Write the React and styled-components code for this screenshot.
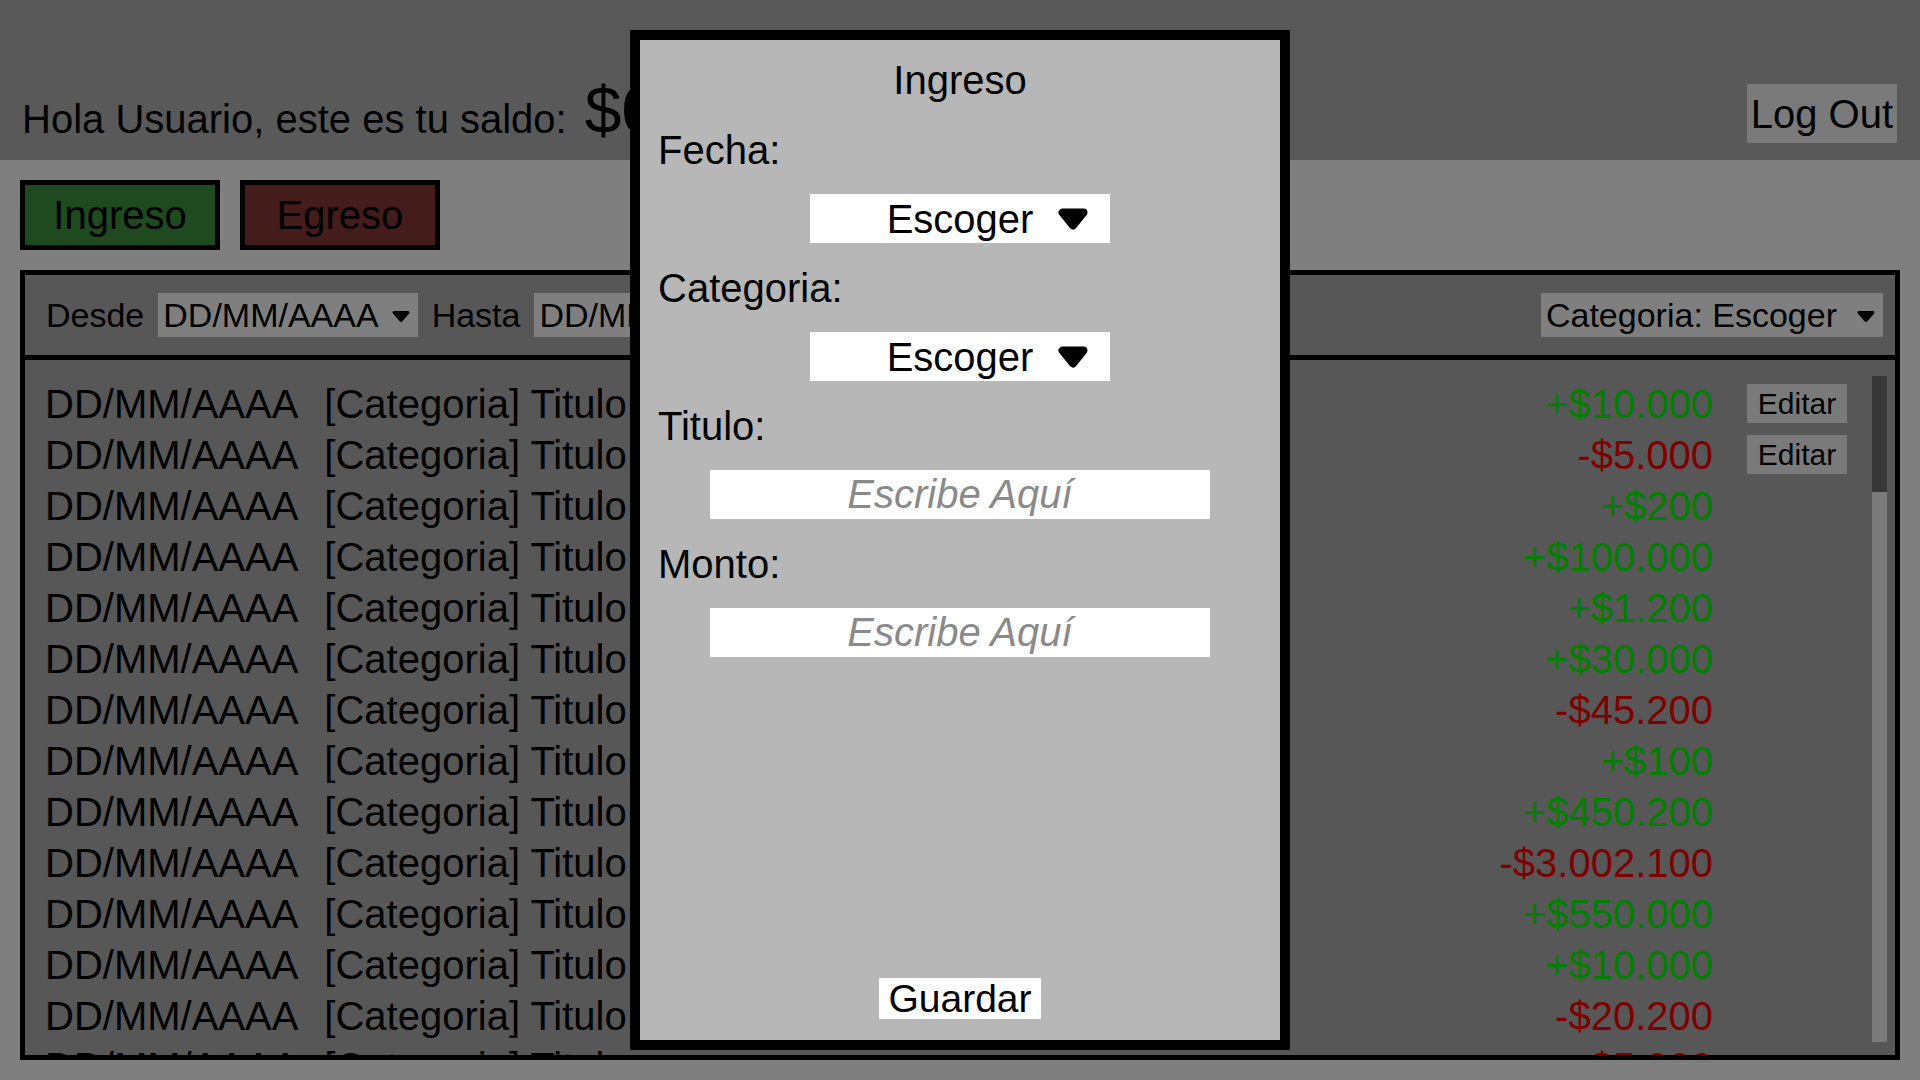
import React from "react";
import styled, { createGlobalStyle } from "styled-components";

const GlobalStyle = createGlobalStyle`
  * { box-sizing: border-box; }
  html, body {
    margin: 0;
    padding: 0;
  }
  body {
    font-family: "Liberation Sans", Arial, sans-serif;
    background: #ffffff;
    color: #000000;
    overflow: hidden;
  }
`;

const movements = [
  { amount: "+$10.000", editable: true },
  { amount: "-$5.000", editable: true },
  { amount: "+$200" },
  { amount: "+$100.000" },
  { amount: "+$1.200" },
  { amount: "+$30.000" },
  { amount: "-$45.200" },
  { amount: "+$100" },
  { amount: "+$450.200" },
  { amount: "-$3.002.100" },
  { amount: "+$550.000" },
  { amount: "+$10.000" },
  { amount: "-$20.200" },
  { amount: "-$5.000" },
];

function Caret({ small }) {
  if (small) {
    return (
      <svg width="20" height="13" viewBox="0 0 20 13">
        <path d="M3 2.5 H17 L10 10.5 Z" fill="#000" stroke="#000" strokeWidth="3" strokeLinejoin="round" />
      </svg>
    );
  }
  return (
    <svg width="34" height="24" viewBox="0 0 34 24">
      <path d="M6.5 5.5 H27.5 L17 18.5 Z" fill="#000" stroke="#000" strokeWidth="8" strokeLinejoin="round" />
    </svg>
  );
}

export default function App() {
  return (
    <>
      <GlobalStyle />
      <Page>
        <Header>
          <Greeting>
            <span>Hola Usuario, este es tu saldo:</span>
            <Balance>$0</Balance>
          </Greeting>
          <LogOut>Log Out</LogOut>
        </Header>
        <Main>
          <Actions>
            <TypeButton $bg="#3e943e">Ingreso</TypeButton>
            <TypeButton $bg="#883838">Egreso</TypeButton>
          </Actions>
          <Table>
            <Filters>
              <span>Desde</span>
              <FilterSelect $gap={12}>
                DD/MM/AAAA
                <Caret small />
              </FilterSelect>
              <span>Hasta</span>
              <FilterSelect $gap={12}>
                DD/MM/AAAA
                <Caret small />
              </FilterSelect>
              <FilterSelect $gap={19} $push>
                Categoria: Escoger
                <Caret small />
              </FilterSelect>
            </Filters>
            <Body>
              <Rows>
                {movements.map((m, i) => (
                  <Row key={i}>
                    <DateCell>DD/MM/AAAA</DateCell>
                    <TitleCell>[Categoria] Titulo</TitleCell>
                    <Amount $positive={m.amount.startsWith("+")}>{m.amount}</Amount>
                    <ActionCell>{m.editable && <EditButton>Editar</EditButton>}</ActionCell>
                  </Row>
                ))}
              </Rows>
              <ScrollTrack>
                <ScrollThumb />
              </ScrollTrack>
            </Body>
          </Table>
        </Main>
      </Page>
      <Overlay>
        <Modal>
          <ModalTitle>Ingreso</ModalTitle>
          <FieldLabel>Fecha:</FieldLabel>
          <Picker>
            <PickerText>Escoger</PickerText>
            <PickerIcon>
              <Caret />
            </PickerIcon>
          </Picker>
          <FieldLabel>Categoria:</FieldLabel>
          <Picker>
            <PickerText>Escoger</PickerText>
            <PickerIcon>
              <Caret />
            </PickerIcon>
          </Picker>
          <FieldLabel>Titulo:</FieldLabel>
          <TextField placeholder="Escribe Aquí" />
          <FieldLabel>Monto:</FieldLabel>
          <TextField placeholder="Escribe Aquí" />
          <SaveButton>Guardar</SaveButton>
        </Modal>
      </Overlay>
    </>
  );
}

const Page = styled.div`
  height: 100vh;
  display: flex;
  flex-direction: column;
`;

const Header = styled.header`
  height: 160px;
  flex-shrink: 0;
  background: #b3b3b3;
  display: flex;
  justify-content: space-between;
  align-items: flex-end;
  padding: 0 23px 12px 22px;
`;

const Greeting = styled.div`
  display: flex;
  align-items: baseline;
  gap: 18px;
  font-size: 40px;
`;

const Balance = styled.span`
  font-size: 66px;
`;

const LogOut = styled.button`
  font-family: inherit;
  font-size: 40px;
  line-height: 46px;
  padding: 7px 4px 6px;
  margin-bottom: 5px;
  border: none;
  background: #f4f4f4;
  color: #000;
`;

const Main = styled.main`
  flex: 1;
  min-height: 0;
  display: flex;
  flex-direction: column;
  gap: 20px;
  padding: 20px;
`;

const Actions = styled.div`
  display: flex;
  gap: 20px;
`;

const TypeButton = styled.button`
  width: 200px;
  height: 70px;
  border: 5px solid #000;
  background: ${({ $bg }) => $bg};
  font-family: inherit;
  font-size: 40px;
  color: #000;
  padding: 0;
`;

const Table = styled.section`
  flex: 1;
  min-height: 0;
  border: 5px solid #000;
  background: #afafaf;
  display: flex;
  flex-direction: column;
`;

const Filters = styled.div`
  height: 85px;
  flex-shrink: 0;
  border-bottom: 5px solid #000;
  display: flex;
  align-items: center;
  gap: 14px;
  padding: 0 12px 0 21px;
  font-size: 34px;
`;

const FilterSelect = styled.div`
  height: 44px;
  display: flex;
  align-items: center;
  gap: ${({ $gap }) => $gap}px;
  padding: 0 7px 0 5px;
  background: #ffffff;
  margin-left: ${({ $push }) => ($push ? "auto" : "0")};

  svg {
    margin-top: 3px;
  }
`;

const Body = styled.div`
  flex: 1;
  min-height: 0;
  display: flex;
  gap: 25px;
  padding: 0 8px 0 20px;
  overflow: hidden;
`;

const Rows = styled.div`
  flex: 1;
  display: flex;
  flex-direction: column;
  padding-top: 18px;
`;

const Row = styled.div`
  height: 51px;
  flex-shrink: 0;
  display: flex;
  align-items: center;
  font-size: 40px;
  line-height: 46px;
`;

const DateCell = styled.span`
  margin-right: 26px;
`;

const TitleCell = styled.span`
  flex: 1;
`;

const Amount = styled.span`
  color: ${({ $positive }) => ($positive ? "#00ff00" : "#ff0000")};
`;

const ActionCell = styled.div`
  width: 100px;
  margin-left: 34px;
  flex-shrink: 0;
  display: flex;
`;

const EditButton = styled.button`
  width: 100px;
  height: 39px;
  border: none;
  padding: 0;
  background: #f4f4f4;
  font-family: inherit;
  font-size: 30px;
  color: #000;
`;

const ScrollTrack = styled.div`
  width: 15px;
  flex-shrink: 0;
  margin: 16px 0 13px;
  background: #f6f6f6;
`;

const ScrollThumb = styled.div`
  height: 116px;
  background: #6e6e6e;
`;

const Overlay = styled.div`
  position: fixed;
  inset: 0;
  background: rgba(0, 0, 0, 0.5);
  display: flex;
  justify-content: center;
  align-items: flex-start;
  padding-top: 30px;
`;

const Modal = styled.div`
  width: 660px;
  height: 1020px;
  border: 10px solid #000;
  background: #b7b7b7;
  display: flex;
  flex-direction: column;
  gap: 21.5px;
  padding: 17px 18px 21px;
  font-size: 40px;
  line-height: 46px;
`;

const ModalTitle = styled.div`
  text-align: center;
  margin-bottom: 2px;
`;

const FieldLabel = styled.div``;

const Picker = styled.div`
  align-self: center;
  width: 300px;
  height: 49px;
  background: #ffffff;
  display: grid;
  grid-template-columns: 1fr auto 1fr;
  align-items: center;
`;

const PickerText = styled.span`
  grid-column: 2;
`;

const PickerIcon = styled.span`
  grid-column: 3;
  justify-self: end;
  margin-right: 20px;
  display: flex;
`;

const TextField = styled.input`
  align-self: center;
  width: 500px;
  height: 49px;
  border: none;
  outline: none;
  padding: 0;
  background: #ffffff;
  font-family: inherit;
  font-size: 40px;
  text-align: center;

  &::placeholder {
    font-style: italic;
    color: #8a8a8a;
  }
`;

const SaveButton = styled.button`
  margin-top: auto;
  align-self: center;
  height: 41px;
  padding: 0 9px;
  border: none;
  background: #ffffff;
  font-family: inherit;
  font-size: 39px;
  line-height: 41px;
  color: #000;
`;
